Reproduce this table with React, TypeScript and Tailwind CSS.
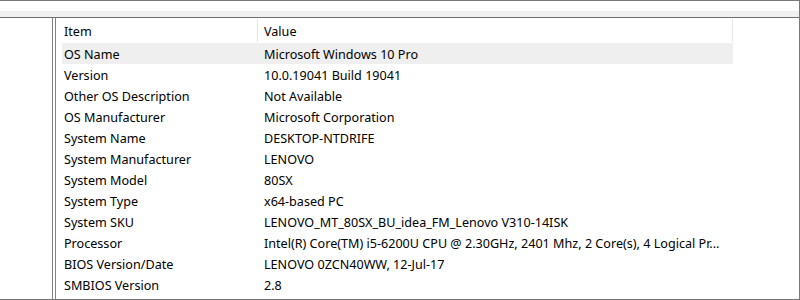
import React from "react";

const rows: [string, string][] = [
  ["OS Name", "Microsoft Windows 10 Pro"],
  ["Version", "10.0.19041 Build 19041"],
  ["Other OS Description", "Not Available"],
  ["OS Manufacturer", "Microsoft Corporation"],
  ["System Name", "DESKTOP-NTDRIFE"],
  ["System Manufacturer", "LENOVO"],
  ["System Model", "80SX"],
  ["System Type", "x64-based PC"],
  ["System SKU", "LENOVO_MT_80SX_BU_idea_FM_Lenovo V310-14ISK"],
  ["Processor", "Intel(R) Core(TM) i5-6200U CPU @ 2.30GHz, 2401 Mhz, 2 Core(s), 4 Logical Pr..."],
  ["BIOS Version/Date", "LENOVO 0ZCN40WW, 12-Jul-17"],
  ["SMBIOS Version", "2.8"],
];

const App = () => {
  return (
    <div
      className="w-[800px] h-[300px] bg-white border-t border-r border-b border-[#7a7a7a] flex flex-col overflow-hidden text-[12.6px] leading-[16px] text-black"
      style={{ fontFamily: '"Noto Sans", "Segoe UI", sans-serif' }}
    >
      <div className="h-[10px] bg-white" />
      <div className="h-[6px] bg-[#f0f0f0]" />
      <div className="flex flex-1 border-t border-[#6e6e6e] min-h-0">
        <div className="w-[53px] border-r border-[#828282] bg-white" />
        <div className="w-[2px]" />
        <div className="flex-1 border-l border-[#828282] bg-white pl-[6px]">
          <div className="flex h-[25px] items-center">
            <div className="w-[195px] pl-[2px] pt-[2px] h-full flex items-center">Item</div>
            <div className="w-px self-stretch my-[1px] bg-[#e5e5e5]" />
            <div className="w-[474px] pl-[6px] pt-[2px] h-full flex items-center">Value</div>
            <div className="w-px self-stretch my-[1px] bg-[#e5e5e5]" />
          </div>
          {rows.map(([k, v], i) => (
            <div
              key={k}
              className={`flex h-[21px] items-center pt-[2px] w-[671px] ${i === 0 ? "bg-[#efefef]" : ""}`}
            >
              <div className="w-[195px] pl-[2px] whitespace-nowrap overflow-hidden">{k}</div>
              <div className="w-px" />
              <div className="w-[474px] pl-[6px] whitespace-nowrap overflow-hidden">{v}</div>
            </div>
          ))}
        </div>
      </div>
    </div>
  );
};

export default App;
